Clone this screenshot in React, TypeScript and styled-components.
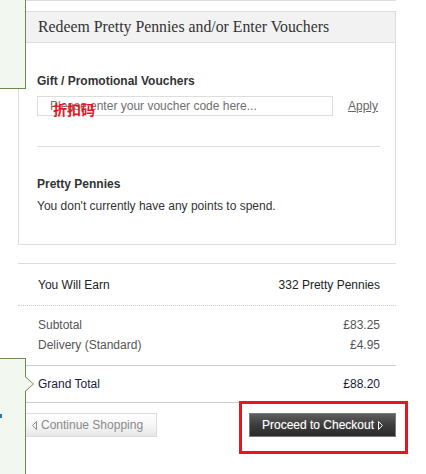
import styled, { createGlobalStyle } from "styled-components";

const GlobalStyle = createGlobalStyle`
  body {
    margin: 0;
    background: #ffffff;
    font-family: "Liberation Sans", Arial, sans-serif;
    font-size: 12px;
    color: #333;
  }
`;

const Page = styled.div`
  position: relative;
  width: 426px;
  height: 474px;
  overflow: hidden;
`;

const Column = styled.div`
  margin-left: 18px;
  width: 378px;
  border-top: 1px solid #dddddd;
  padding-top: 10px;
`;

const VoucherBox = styled.div`
  border: 1px solid #dddddd;
`;

const BoxHeader = styled.h2`
  margin: 0;
  height: 30px;
  line-height: 30px;
  padding-left: 19px;
  background: #f2f2f2;
  border-bottom: 1px solid #dddddd;
  font-family: "Liberation Serif", Georgia, serif;
  font-weight: normal;
  font-size: 15.8px;
  color: #333;
`;

const BoxBody = styled.div`
  padding: 31px 15px 30px 18px;
`;

const Label = styled.h3`
  margin: 0;
  font-size: 12px;
  line-height: 15px;
  font-weight: bold;
  color: #333;
`;

const VoucherRow = styled.div`
  display: flex;
  align-items: center;
  margin-top: 7px;
`;

const InputWrap = styled.div`
  position: relative;
  width: 296px;
`;

const VoucherInput = styled.input`
  box-sizing: border-box;
  width: 100%;
  height: 20px;
  border: 1px solid #dddddd;
  padding: 0 0 0 12px;
  font-family: "Liberation Sans", Arial, sans-serif;
  font-size: 12px;
  color: #666;
  outline: none;

  &::placeholder {
    color: #6f6f6f;
  }
`;

const Watermark = styled.span`
  position: absolute;
  left: 16px;
  top: 5px;
  font-family: "Noto Sans CJK SC", sans-serif;
  font-weight: bold;
  font-size: 14px;
  line-height: 17px;
  color: #e8141e;
  pointer-events: none;
`;

const ApplyLink = styled.a`
  margin-left: 15px;
  color: #666;
  text-decoration: underline;
  font-size: 12px;
`;

const Divider = styled.hr`
  margin: 30px 0 30px;
  border: 0;
  border-top: 1px solid #dddddd;
`;

const Note = styled.p`
  margin: 7px 0 0;
  line-height: 15px;
  color: #333;
`;

const Summary = styled.div`
  margin-top: 18px;
  border-top: 1px solid #dddddd;
`;

const SummaryBlock = styled.div<{ $dotted?: boolean; $pad: string }>`
  display: flex;
  flex-direction: column;
  gap: 5px;
  padding: ${(p) => p.$pad};
  border-bottom: 1px ${(p) => (p.$dotted ? "dotted" : "solid")} #cccccc;
`;

const Row = styled.div<{ $tone?: string }>`
  display: flex;
  justify-content: space-between;
  line-height: 15px;
  color: ${(p) => p.$tone || "#555"};
`;

const Buttons = styled.div`
  display: flex;
  justify-content: space-between;
  margin-top: 10px;
  padding-left: 2px;
`;

const ContinueButton = styled.button`
  box-sizing: border-box;
  display: flex;
  align-items: center;
  gap: 4px;
  width: 137px;
  height: 24px;
  padding: 0 0 0 11px;
  border: 1px solid #dddddd;
  background: linear-gradient(#ffffff, #f4f4f4 60%, #e6e6e6);
  font-family: "Liberation Sans", Arial, sans-serif;
  font-size: 12px;
  color: #8a8a8a;
`;

const CheckoutButton = styled.button`
  box-sizing: border-box;
  display: flex;
  align-items: center;
  justify-content: center;
  gap: 4px;
  width: 147px;
  height: 24px;
  padding: 0;
  border: 1px solid #7a7a7a;
  background: linear-gradient(#5e5e5e, #3c3c3c 50%, #2a2a2a);
  font-family: "Liberation Sans", Arial, sans-serif;
  font-size: 12px;
  color: #ffffff;
  text-shadow: 0 0 1px rgba(255, 255, 255, 0.4);
`;

const Highlight = styled.div`
  position: absolute;
  left: 239px;
  top: 401px;
  width: 169px;
  height: 53px;
  box-sizing: border-box;
  border: 3px solid #e8141e;
  pointer-events: none;
`;

const SidePanel = styled.div<{ $top: number; $height: number }>`
  position: absolute;
  left: 0;
  top: ${(p) => p.$top}px;
  width: 26px;
  height: ${(p) => p.$height}px;
  box-sizing: border-box;
  background: #f2f7ef;
  border: 1px solid #6f8750;
  border-left: 0;
`;

const TopPanel = styled(SidePanel)`
  border-top: 0;
`;

const BottomPanel = styled(SidePanel)`
  border-bottom: 0;

  &::before,
  &::after {
    content: "";
    position: absolute;
    top: 17px;
    border-style: solid;
    border-color: transparent;
  }

  &::before {
    right: -9px;
    border-width: 8px 0 8px 9px;
    border-left-color: #6f8750;
  }

  &::after {
    right: -8px;
    top: 18px;
    border-width: 7px 0 7px 8px;
    border-left-color: #f2f7ef;
  }
`;

const LinkStub = styled.span`
  position: absolute;
  left: 0;
  top: 55px;
  width: 2px;
  height: 4px;
  background: #1f78b4;
`;

function Triangle({ dir }: { dir: "left" | "right" }) {
  return (
    <svg width="5" height="9" viewBox="0 0 5 9" aria-hidden>
      <path
        d={dir === "left" ? "M4.5 0.5 L0.5 4.5 L4.5 8.5 Z" : "M0.5 0.5 L4.5 4.5 L0.5 8.5 Z"}
        fill="none"
        stroke="currentColor"
        strokeWidth="1"
      />
    </svg>
  );
}

export default function App() {
  return (
    <Page>
      <GlobalStyle />
      <Column>
        <VoucherBox>
          <BoxHeader>Redeem Pretty Pennies and/or Enter Vouchers</BoxHeader>
          <BoxBody>
            <Label>Gift / Promotional Vouchers</Label>
            <VoucherRow>
              <InputWrap>
                <VoucherInput placeholder="Please enter your voucher code here..." />
                <Watermark>折扣码</Watermark>
              </InputWrap>
              <ApplyLink href="#">Apply</ApplyLink>
            </VoucherRow>
            <Divider />
            <Label>Pretty Pennies</Label>
            <Note>You don't currently have any points to spend.</Note>
          </BoxBody>
        </VoucherBox>

        <Summary>
          <SummaryBlock $dotted $pad="14px 16px 12px 20px">
            <Row $tone="#222">
              <span>You Will Earn</span>
              <span>332 Pretty Pennies</span>
            </Row>
          </SummaryBlock>
          <SummaryBlock $pad="12px 16px 12px 20px">
            <Row>
              <span>Subtotal</span>
              <span>£83.25</span>
            </Row>
            <Row>
              <span>Delivery (Standard)</span>
              <span>£4.95</span>
            </Row>
          </SummaryBlock>
          <SummaryBlock $pad="11px 16px 10px 20px">
            <Row $tone="#1a1a3c">
              <span>Grand Total</span>
              <span>£88.20</span>
            </Row>
          </SummaryBlock>
        </Summary>

        <Buttons>
          <ContinueButton>
            <Triangle dir="left" />
            Continue Shopping
          </ContinueButton>
          <CheckoutButton>
            Proceed to Checkout
            <Triangle dir="right" />
          </CheckoutButton>
        </Buttons>
      </Column>

      <Highlight />
      <TopPanel $top={0} $height={89} />
      <BottomPanel $top={358} $height={116}>
        <LinkStub />
      </BottomPanel>
    </Page>
  );
}
